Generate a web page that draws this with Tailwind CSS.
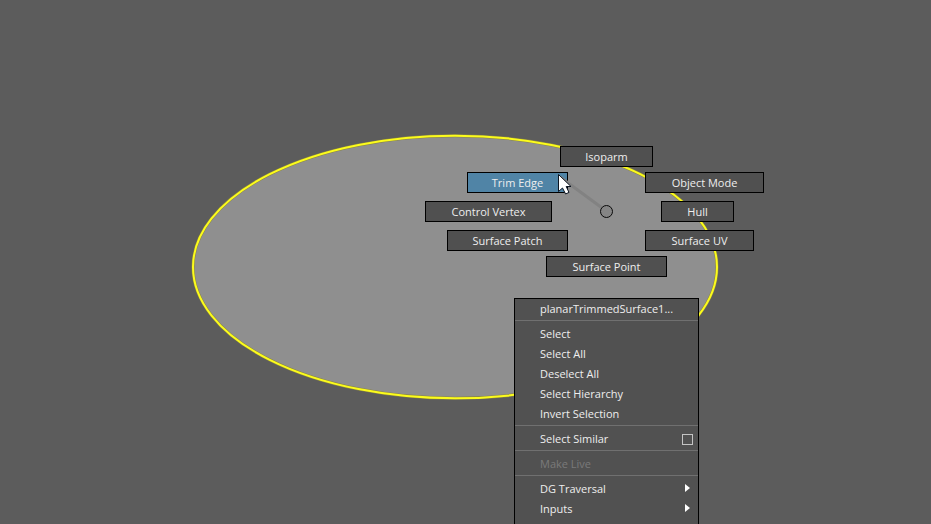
<!DOCTYPE html>
<html lang="en">
<head>
<meta charset="utf-8">
<meta name="viewport" content="width=device-width, initial-scale=1">
<title>Viewport</title>
<script src="https://cdn.jsdelivr.net/npm/@tailwindcss/browser@4"></script>
</head>
<body class="bg-[#5c5c5c]">
<main class="relative h-screen w-full overflow-hidden bg-[#5c5c5c] font-['Open_Sans','Noto_Sans',sans-serif] text-[11px] leading-5 text-[#eeeeee]">
  <!-- Trimmed surface -->
  <svg class="absolute top-[134px] left-[191px]" width="528" height="266" viewBox="0 0 528 266" aria-hidden="true">
    <ellipse cx="264" cy="133" rx="262" ry="131.3" fill="#8f8f8f" stroke="#8a8640" stroke-width="3"/>
    <ellipse cx="264" cy="133" rx="262" ry="131.3" fill="none" stroke="#fcfc1c" stroke-width="2"/>
  </svg>

  <!-- Marking menu -->
  <nav aria-label="Marking menu">
    <button class="absolute top-[146px] left-[560px] flex h-[21px] w-[93px] items-center justify-center border border-black bg-[#505050]">Isoparm</button>
    <button class="absolute top-[172px] left-[467px] flex h-[21px] w-[101px] items-center justify-center border border-black bg-[#5084a6]">Trim Edge</button>
    <button class="absolute top-[172px] left-[645px] flex h-[21px] w-[119px] items-center justify-center border border-black bg-[#505050]">Object Mode</button>
    <button class="absolute top-[201px] left-[425px] flex h-[21px] w-[127px] items-center justify-center border border-black bg-[#505050]">Control Vertex</button>
    <button class="absolute top-[201px] left-[661px] flex h-[21px] w-[73px] items-center justify-center border border-black bg-[#505050]">Hull</button>
    <button class="absolute top-[230px] left-[447px] flex h-[21px] w-[121px] items-center justify-center border border-black bg-[#505050]">Surface Patch</button>
    <button class="absolute top-[230px] left-[645px] flex h-[21px] w-[109px] items-center justify-center border border-black bg-[#505050]">Surface UV</button>
    <button class="absolute top-[256px] left-[546px] flex h-[21px] w-[121px] items-center justify-center border border-black bg-[#505050]">Surface Point</button>
  </nav>

  <!-- Gesture line, origin ring and pointer -->
  <svg class="pointer-events-none absolute top-[170px] left-[552px]" width="64" height="50" viewBox="0 0 64 50" aria-hidden="true">
    <path d="M8 7L49.500 37.500" stroke="#828282" stroke-width="3" fill="none"/>
    <circle cx="54.500" cy="41.500" r="6" fill="#858585" stroke="#0a0a0a" stroke-width="1"/>
    <path d="M6.500 4.500V21.500L10.500 18L13.600 24L17 22.400L14.200 16.500H19Z" fill="#fff" stroke="#0b1420" stroke-width="1"/>
  </svg>

  <!-- Context menu -->
  <div class="absolute top-[298px] left-[514px] w-[185px] border border-b-0 border-black bg-[#515151] pb-5" role="menu">
    <button role="menuitem" class="flex h-5 w-full items-center pl-[25px]">planarTrimmedSurface1...</button>
    <hr class="mt-px mb-[3px] border-t border-[#707070]">
    <button role="menuitem" class="flex h-5 w-full items-center pl-[25px]">Select</button>
    <button role="menuitem" class="flex h-5 w-full items-center pl-[25px]">Select All</button>
    <button role="menuitem" class="flex h-5 w-full items-center pl-[25px]">Deselect All</button>
    <button role="menuitem" class="flex h-5 w-full items-center pl-[25px]">Select Hierarchy</button>
    <button role="menuitem" class="flex h-5 w-full items-center pl-[25px]">Invert Selection</button>
    <hr class="mt-px mb-[3px] border-t border-[#707070]">
    <div class="flex h-5 items-center justify-between pr-[5px] pl-[25px]">
      <label for="similar-options">Select Similar</label>
      <input id="similar-options" type="checkbox" class="size-[11px] appearance-none border border-[#c4c4c4]">
    </div>
    <hr class="mt-px mb-[3px] border-t border-[#707070]">
    <button role="menuitem" disabled class="flex h-5 w-full items-center pl-[25px] text-[#7a7a7a]">Make Live</button>
    <hr class="mt-px mb-[3px] border-t border-[#707070]">
    <button role="menuitem" aria-haspopup="true" class="flex h-5 w-full items-center justify-between pr-2 pl-[25px]">DG Traversal
      <svg class="mb-[3px]" width="5" height="8" viewBox="0 0 5 8" fill="#fff" aria-hidden="true"><path d="M0 0L5 4L0 8Z"/></svg>
    </button>
    <button role="menuitem" aria-haspopup="true" class="flex h-5 w-full items-center justify-between pr-2 pl-[25px]">Inputs
      <svg class="mb-[3px]" width="5" height="8" viewBox="0 0 5 8" fill="#fff" aria-hidden="true"><path d="M0 0L5 4L0 8Z"/></svg>
    </button>
  </div>
</main>
</body>
</html>
